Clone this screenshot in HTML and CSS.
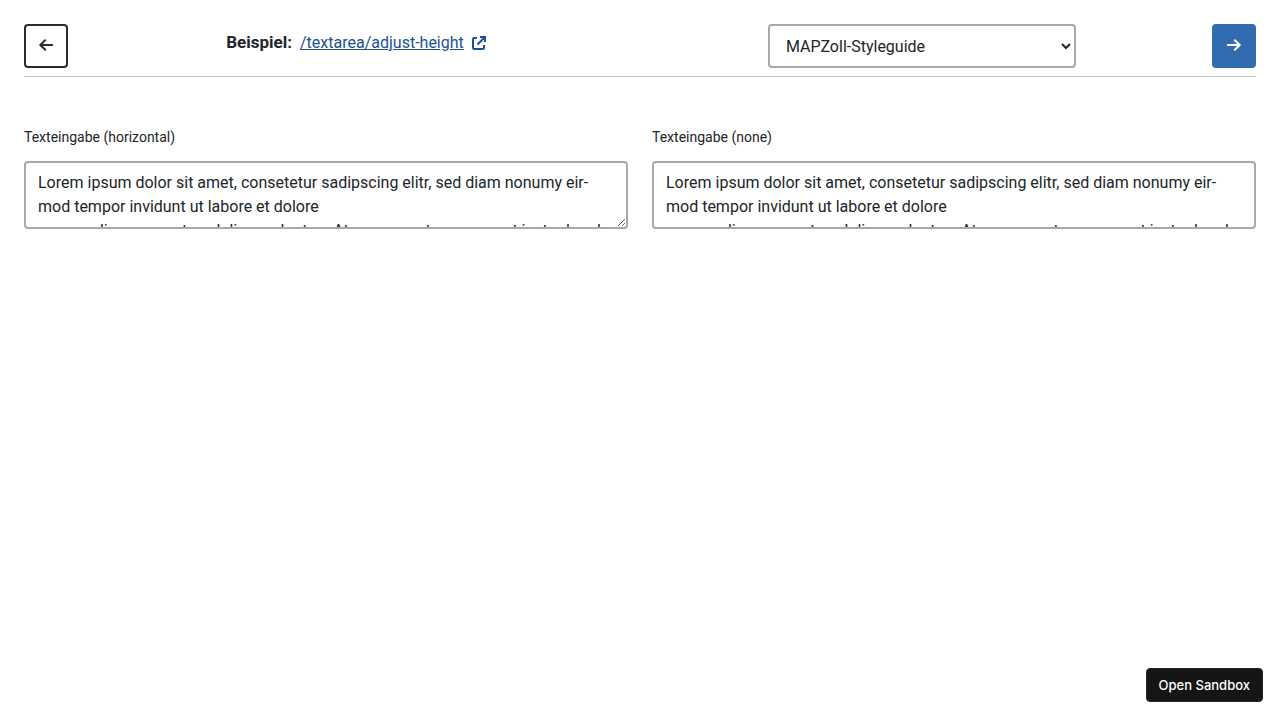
FILE: index.html
```html
<!DOCTYPE html>
<html lang="de">
<head>
<meta charset="utf-8">
<meta name="viewport" content="width=device-width, initial-scale=1">
<title>/textarea/adjust-height</title>
<link rel="stylesheet" href="styles.css">
</head>
<body>
<header class="toolbar">
  <button type="button" class="nav-button nav-button-back" aria-label="Zurück">
    <svg class="arrow" viewBox="0 0 16 16" aria-hidden="true"><path d="M14.2 8H2.4M7.2 3.200 2.200 8l5 4.800"/></svg>
  </button>
  <div class="example">
    <strong class="example-title">Beispiel:</strong>
    <a class="example-link" href="/textarea/adjust-height"><span class="example-path">/textarea/adjust-height</span><svg class="external" viewBox="0 0 16 16" aria-hidden="true"><path d="M6 3H3.2Q2 3 2 4.2v8.6Q2 14 3.2 14h8.600q1.200 0 1.200-1.200V10M9 2H14v5M13.500 2.500 6.500 9.500"/></svg></a>
  </div>
  <select class="theme-select" aria-label="Styleguide">
    <option>MAPZoll-Styleguide</option>
  </select>
  <button type="button" class="nav-button nav-button-next" aria-label="Weiter">
    <svg class="arrow" viewBox="0 0 16 16" aria-hidden="true"><path d="M1.800 8h11.800M8.800 3.200l5 4.800-5 4.800"/></svg>
  </button>
</header>
<main class="fields">
  <div class="field">
    <label class="field-label" for="text-horizontal">Texteingabe (horizontal)</label>
    <textarea class="field-input resize-horizontal" id="text-horizontal" rows="2">Lorem ipsum dolor sit amet, consetetur sadipscing elitr, sed diam nonumy eir&shy;mod tempor invidunt ut labore et dolore
magna aliquyam erat, sed diam voluptua. At vero eos et accusam et justo duo do&shy;lores et ea rebum.</textarea>
  </div>
  <div class="field">
    <label class="field-label" for="text-none">Texteingabe (none)</label>
    <textarea class="field-input resize-none" id="text-none" rows="2">Lorem ipsum dolor sit amet, consetetur sadipscing elitr, sed diam nonumy eir&shy;mod tempor invidunt ut labore et dolore
magna aliquyam erat, sed diam voluptua. At vero eos et accusam et justo duo do&shy;lores et ea rebum.</textarea>
  </div>
</main>
<button type="button" class="sandbox-button">Open Sandbox</button>
</body>
</html>
```
FILE: styles.css
```css
*, *::before, *::after { box-sizing: border-box; }

body {
  margin: 0;
  padding: 24px;
  background: #fff;
  color: #212529;
  font: 16px/24px Roboto, sans-serif;
}

.toolbar {
  display: grid;
  grid-template-columns: 44px 1fr 1fr 44px;
  column-gap: 16px;
  justify-items: center;
  padding-bottom: 8px;
  border-bottom: 1px solid #c3c3c3;
}

.nav-button {
  display: flex;
  align-items: center;
  justify-content: center;
  width: 44px;
  height: 44px;
  padding: 0 0 2px;
  border: 2px solid #2b2b2d;
  border-radius: 4px;
  background: #fff;
  color: #2b2b2d;
}

.nav-button-next {
  border-color: #326cb0;
  background: #326cb0;
  color: #fff;
}

.arrow, .external {
  width: 16px;
  height: 16px;
  fill: none;
  stroke: currentColor;
  stroke-width: 2;
  stroke-linecap: round;
  stroke-linejoin: round;
}

.example {
  display: flex;
  align-items: baseline;
  gap: 8px;
  padding: 6px 3px 0 0;
}

.example-title { font-size: 17px; }

.example-link {
  display: flex;
  align-items: center;
  gap: 7px;
  color: #1a5291;
  text-decoration: none;
}

.example-path { text-decoration: underline; }

.external {
  stroke-linecap: butt;
  stroke-linejoin: miter;
}

.theme-select {
  width: 308px;
  max-width: 100%;
  height: 44px;
  padding: 0 0 0 12px;
  border: 2px solid #a8a8a8;
  border-radius: 4px;
  background: #fff;
  color: #212529;
  font: inherit;
}

.fields {
  display: grid;
  grid-template-columns: 1fr 1fr;
  gap: 24px;
  padding-top: 48px;
}

.field-label {
  display: block;
  margin-bottom: 12px;
  font-size: 14px;
}

.field-input {
  display: block;
  width: 100%;
  height: 68px;
  padding: 8px 11px 8px 12px;
  overflow: hidden;
  border: 2px solid #a8a8a8;
  border-radius: 4px;
  background: #fff;
  color: #212529;
  font: inherit;
}

.resize-horizontal { resize: horizontal; }
.resize-none { resize: none; }

.sandbox-button {
  position: fixed;
  right: 17px;
  bottom: 18px;
  height: 34px;
  padding: 0 12px;
  border: 1px solid #252525;
  border-radius: 4px;
  background: #151515;
  color: #fff;
  font: 500 13px/16px Inter, sans-serif;
}
```
